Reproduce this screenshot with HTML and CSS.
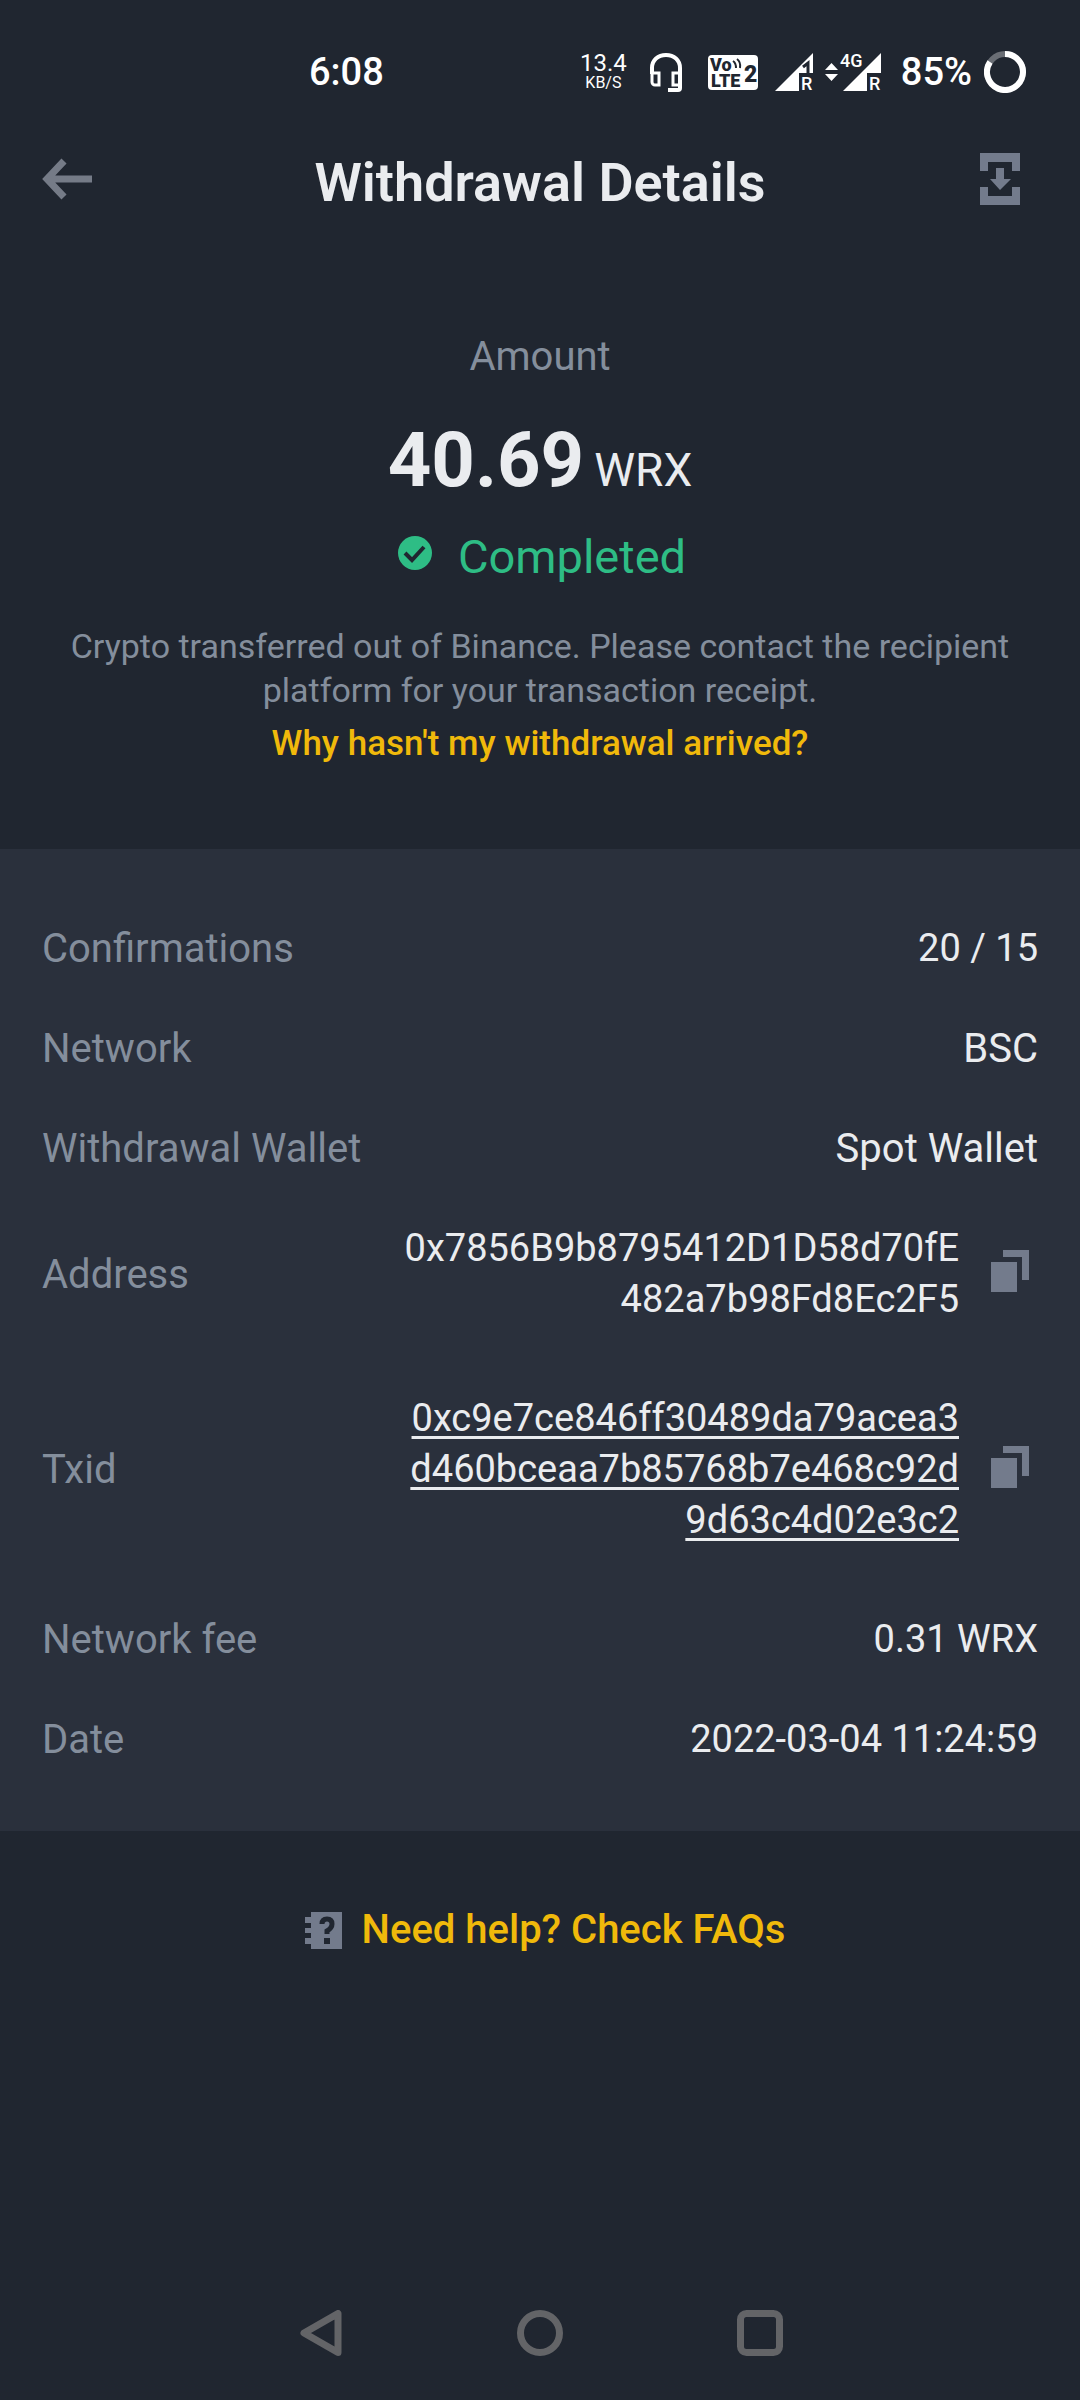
FILE: index.html
```html
<!DOCTYPE html>
<html lang="en">
<head>
<meta charset="utf-8">
<meta name="viewport" content="width=device-width, initial-scale=1">
<title>Withdrawal Details</title>
<link rel="stylesheet" href="styles.css">
</head>
<body>
<div class="screen">
  <div class="status-bar">
    <span class="clock">6:08</span>
    <div class="status-icons">
      <div class="net-speed"><span class="speed-value">13.4</span><span class="speed-unit">KB/S</span></div>
      <svg class="headset" width="34" height="40" viewBox="0 0 34 40" fill="none" stroke="#fff" stroke-width="4" aria-hidden="true">
        <path d="M3 22V16C3 8 9 3 17 3s14 5 14 13v20a2 2 0 0 1-2 2H19"/>
        <path d="M3 21h7v12H6a3 3 0 0 1-3-3zM31 21h-7v12h7z" stroke-width="3"/>
      </svg>
      <svg class="volte" width="52" height="37" viewBox="0 0 52 37" aria-hidden="true">
        <rect x="1" y="1" width="50" height="35" rx="4" fill="#fff"/>
        <g class="volte-text">
          <text x="3" y="17" font-size="18">Vo</text>
          <text x="4" y="33" font-size="18">LTE</text>
          <text x="37" y="28" font-size="23">2</text>
        </g>
        <path d="M26 7q3 2 3 7M30 5q4 3 3 9" fill="none" stroke="#202630" stroke-width="2"/>
      </svg>
      <svg class="signal-one" width="40" height="46" viewBox="0 -4 40 46" aria-hidden="true">
        <path d="M38 0v20H24v18H0z" fill="#fff"/>
        <path d="M28 14l5-4v10" fill="none" stroke="#202630" stroke-width="3"/>
        <text x="26" y="37" font-size="18" class="signal-text">R</text>
      </svg>
      <svg class="signal-two" width="58" height="46" viewBox="0 -4 58 46" aria-hidden="true">
        <path d="M0 17l6.500-7 6.500 7zM0 21l6.500 7 6.500-7zM56 0v20H42v18H18z" fill="#fff"/>
        <text x="15" y="14" font-size="18" class="signal-text">4G</text>
        <text x="44" y="37" font-size="18" class="signal-text">R</text>
      </svg>
      <span class="battery-level">85%</span>
      <svg class="battery" width="42" height="42" viewBox="0 0 42 42" fill="none" stroke-width="6" aria-hidden="true">
        <circle cx="21" cy="21" r="18" stroke="#6a6e75"/>
        <path d="M21 3A18 18 0 1 1 6 11" stroke="#fff"/>
      </svg>
    </div>
  </div>

  <header class="app-header">
    <button class="icon-button" type="button" aria-label="Back">
      <svg width="50" height="42" viewBox="0 0 50 42" fill="none" stroke="#757b87" stroke-width="7" aria-hidden="true"><path d="M22 3L5 21l17 18M6 21h44"/></svg>
    </button>
    <h1 class="title">Withdrawal Details</h1>
    <button class="icon-button save-button" type="button" aria-label="Save">
      <svg width="40" height="52" viewBox="0 0 40 52" fill="#737b8c" aria-hidden="true"><path d="M0 0h40v18h-8V9H8v9H0zM0 34h8v9h24v-9h8v18H0zM16 15h8v11h7L20 37 10 26h6z"/></svg>
    </button>
  </header>

  <main class="content">
    <section class="summary">
      <p class="amount-label">Amount</p>
      <p class="amount"><strong class="amount-value">40.69</strong><span class="amount-unit">WRX</span></p>
      <p class="status">
        <svg class="status-icon" width="34" height="34" viewBox="0 0 34 34" aria-hidden="true"><circle cx="17" cy="17" r="17" fill="#2ebd85"/><path d="M7 17l7 7L26 11" fill="none" stroke="#202630" stroke-width="4"/></svg>
        <span>Completed</span>
      </p>
      <p class="note">Crypto transferred out of Binance. Please contact the recipient platform for your transaction receipt.</p>
      <a class="note-link" href="#arrival">Why hasn't my withdrawal arrived?</a>
    </section>

    <dl class="details">
      <div class="row"><dt>Confirmations</dt><dd class="numeric">20 / 15</dd></div>
      <div class="row"><dt>Network</dt><dd>BSC</dd></div>
      <div class="row"><dt>Withdrawal Wallet</dt><dd>Spot Wallet</dd></div>
      <div class="row row-copy">
        <dt>Address</dt>
        <dd class="numeric"><span class="hash">0x7856B9b8795412D1D58d70fE<br>482a7b98Fd8Ec2F5</span>
          <button class="copy-button" type="button" aria-label="Copy address"><svg width="38" height="42" viewBox="0 0 38 42" fill="#737b8c" aria-hidden="true"><path d="M0 12h26v30H0zM12 0h26v30h-7V7H12z"/></svg></button></dd>
      </div>
      <div class="row row-copy">
        <dt>Txid</dt>
        <dd class="numeric"><a class="hash" href="#tx">0xc9e7ce846ff30489da79acea3<br>d460bceaa7b85768b7e468c92d<br>9d63c4d02e3c2</a>
          <button class="copy-button" type="button" aria-label="Copy transaction ID"><svg width="38" height="42" viewBox="0 0 38 42" fill="#737b8c" aria-hidden="true"><path d="M0 12h26v30H0zM12 0h26v30h-7V7H12z"/></svg></button></dd>
      </div>
      <div class="row"><dt>Network fee</dt><dd class="numeric">0.31 WRX</dd></div>
      <div class="row"><dt>Date</dt><dd class="numeric">2022-03-04 11:24:59</dd></div>
    </dl>

    <a class="faq-link" href="#faq">
      <svg width="37" height="37" viewBox="0 0 37 37" aria-hidden="true"><path d="M6 0h31v37H6v-5H0v-6h6v-5H0v-5h6v-5H0V5h6z" fill="#737b8c"/><path d="M17 12q0-5 5-5t5 5q0 4-5 7v3" fill="none" stroke="#202630" stroke-width="5"/><path d="M19 26h6v6h-6z" fill="#202630"/></svg>
      <span>Need help? Check FAQs</span>
    </a>
  </main>

  <nav class="system-nav" aria-label="System">
    <button class="nav-button" type="button" aria-label="Back"><svg width="46" height="46" viewBox="0 0 46 46" aria-hidden="true"><path d="M7 23L41 3.500v39z"/></svg></button>
    <button class="nav-button" type="button" aria-label="Home"><svg width="46" height="46" viewBox="0 0 46 46" aria-hidden="true"><circle cx="23" cy="23" r="19.500"/></svg></button>
    <button class="nav-button" type="button" aria-label="Recent apps"><svg width="46" height="46" viewBox="0 0 46 46" aria-hidden="true"><rect x="3.500" y="3.500" width="39" height="39" rx="6"/></svg></button>
  </nav>
</div>
</body>
</html>
```
FILE: styles.css
```css
* { box-sizing: border-box; }

body {
  margin: 0;
  background: #202630;
  color: #eaecef;
  font-family: Roboto, "Liberation Sans", sans-serif;
  font-size: 40px;
}

p, h1, dl, dd { margin: 0; }
a { text-decoration: none; }
svg { display: block; flex: none; }

button {
  display: flex;
  align-items: center;
  padding: 0;
  border: 0;
  background: none;
}

.screen {
  display: flex;
  flex-direction: column;
  min-height: 100vh;
}

/* Status bar */
.status-bar {
  display: flex;
  align-items: center;
  justify-content: space-between;
  height: 144px;
  padding: 0 54px 0 309px;
  color: #fff;
  font-size: 38px;
  font-weight: 500;
}

.status-icons { display: flex; align-items: center; }
.net-speed {
  display: flex;
  flex-direction: column;
  align-items: center;
  margin-right: 22px;
  font-weight: 400;
}
.speed-value { font-size: 24px; line-height: 22px; }
.speed-unit { font-size: 16px; line-height: 18px; }
.headset { margin-right: 24px; }
.volte { margin-right: 16px; }
.signal-one { margin-right: 10px; }
.signal-two { margin-right: 18px; }
.battery-level { margin-right: 12px; }
.volte-text { fill: #202630; font-weight: 900; }
.signal-text { fill: #fff; font-weight: 500; }

/* Header */
.app-header {
  display: grid;
  grid-template-columns: 60px 1fr 60px;
  align-items: start;
  padding: 0 42px;
}
.icon-button { height: 70px; }
.save-button { justify-content: flex-end; padding-right: 18px; }
.title {
  font-size: 54px;
  font-weight: 600;
  line-height: 78px;
  text-align: center;
}

/* Summary */
.summary {
  display: flex;
  flex-direction: column;
  align-items: center;
  padding: 108px 60px 83px;
  text-align: center;
}
.amount-label { color: #848e9c; line-height: 54px; }
.amount {
  display: flex;
  align-items: baseline;
  gap: 10px;
  margin-top: 34px;
  line-height: 84px;
}
.amount-value { font-size: 76px; font-weight: 700; }
.amount-unit { font-size: 46px; line-height: 54px; }
.status {
  display: flex;
  gap: 26px;
  margin-top: 25px;
  padding-left: 4px;
  color: #2ebd85;
  font-size: 47px;
  line-height: 60px;
}
.status-icon { margin-top: 9px; }
.note {
  margin-top: 37px;
  color: #848e9c;
  font-size: 34px;
  line-height: 44px;
}
.note-link {
  margin-top: 10px;
  color: #f0b90b;
  font-size: 35px;
  font-weight: 500;
  line-height: 44px;
}

/* Details */
.details {
  padding: 49px 42px 42px;
  background: #2a303c;
}
.row {
  display: flex;
  align-items: center;
  justify-content: space-between;
  padding: 25px 0 24px;
  line-height: 51px;
}
.row-copy { margin-bottom: 19px; }
.row dt { color: #848e9c; }
.row dd { display: flex; align-items: center; text-align: right; }
.row .numeric { font-size: 38px; }
.hash { color: #eaecef; }
a.hash {
  text-decoration: underline;
  text-decoration-thickness: 3px;
  text-underline-offset: 5px;
  text-decoration-skip-ink: none;
}
.copy-button { padding: 0 9px 6px 32px; }

/* Help link */
.faq-link {
  display: flex;
  align-items: center;
  justify-content: center;
  gap: 20px;
  padding: 69px 0 69px 10px;
  color: #f0b90b;
  font-weight: 500;
  line-height: 60px;
}

/* System navigation */
.system-nav {
  display: flex;
  justify-content: center;
  gap: 174px;
  margin-top: auto;
}
.nav-button { height: 134px; }
.nav-button svg {
  fill: none;
  stroke: #636467;
  stroke-width: 7;
  stroke-linejoin: round;
}
```
